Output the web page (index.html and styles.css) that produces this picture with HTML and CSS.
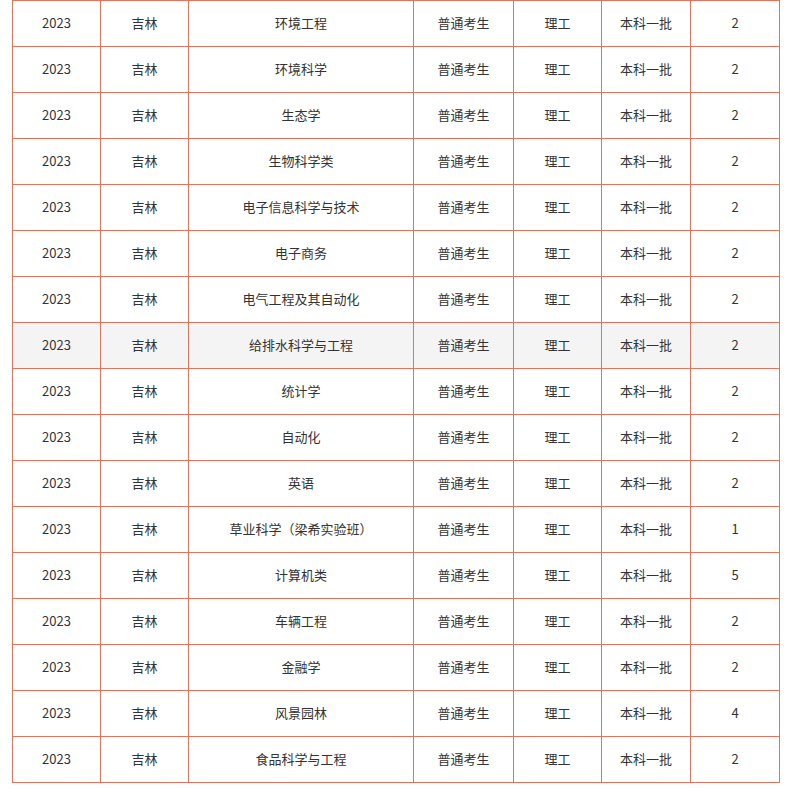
FILE: index.html
```html
<!DOCTYPE html>
<html>
<head>
<meta charset="utf-8">
<link rel="stylesheet" href="styles.css">
</head>
<body>
<table class="tbl">
<colgroup>
<col class="c1"><col class="c2"><col class="c3"><col class="c4"><col class="c5"><col class="c6"><col class="c7">
</colgroup>
<tbody>
<tr><td>2023</td><td>吉林</td><td>环境工程</td><td>普通考生</td><td>理工</td><td>本科一批</td><td>2</td></tr>
<tr><td>2023</td><td>吉林</td><td>环境科学</td><td>普通考生</td><td>理工</td><td>本科一批</td><td>2</td></tr>
<tr><td>2023</td><td>吉林</td><td>生态学</td><td>普通考生</td><td>理工</td><td>本科一批</td><td>2</td></tr>
<tr><td>2023</td><td>吉林</td><td>生物科学类</td><td>普通考生</td><td>理工</td><td>本科一批</td><td>2</td></tr>
<tr><td>2023</td><td>吉林</td><td>电子信息科学与技术</td><td>普通考生</td><td>理工</td><td>本科一批</td><td>2</td></tr>
<tr><td>2023</td><td>吉林</td><td>电子商务</td><td>普通考生</td><td>理工</td><td>本科一批</td><td>2</td></tr>
<tr><td>2023</td><td>吉林</td><td>电气工程及其自动化</td><td>普通考生</td><td>理工</td><td>本科一批</td><td>2</td></tr>
<tr class="hl"><td>2023</td><td>吉林</td><td>给排水科学与工程</td><td>普通考生</td><td>理工</td><td>本科一批</td><td>2</td></tr>
<tr><td>2023</td><td>吉林</td><td>统计学</td><td>普通考生</td><td>理工</td><td>本科一批</td><td>2</td></tr>
<tr><td>2023</td><td>吉林</td><td>自动化</td><td>普通考生</td><td>理工</td><td>本科一批</td><td>2</td></tr>
<tr><td>2023</td><td>吉林</td><td>英语</td><td>普通考生</td><td>理工</td><td>本科一批</td><td>2</td></tr>
<tr><td>2023</td><td>吉林</td><td>草业科学（梁希实验班）</td><td>普通考生</td><td>理工</td><td>本科一批</td><td>1</td></tr>
<tr><td>2023</td><td>吉林</td><td>计算机类</td><td>普通考生</td><td>理工</td><td>本科一批</td><td>5</td></tr>
<tr><td>2023</td><td>吉林</td><td>车辆工程</td><td>普通考生</td><td>理工</td><td>本科一批</td><td>2</td></tr>
<tr><td>2023</td><td>吉林</td><td>金融学</td><td>普通考生</td><td>理工</td><td>本科一批</td><td>2</td></tr>
<tr><td>2023</td><td>吉林</td><td>风景园林</td><td>普通考生</td><td>理工</td><td>本科一批</td><td>4</td></tr>
<tr><td>2023</td><td>吉林</td><td>食品科学与工程</td><td>普通考生</td><td>理工</td><td>本科一批</td><td>2</td></tr>
</tbody>
</table>
</body>
</html>
```
FILE: styles.css
```css
html, body {
  margin: 0;
  padding: 0;
  background: #ffffff;
}
body {
  padding-left: 12px;
  font-family: "Noto Sans CJK SC", "Noto Sans", sans-serif;
  font-size: 13px;
  color: #333333;
}
.tbl {
  border-collapse: collapse;
  table-layout: fixed;
  width: 767px;
}
.c1 { width: 88px; }
.c2 { width: 88px; }
.c3 { width: 225px; }
.c4 { width: 100px; }
.c5 { width: 88px; }
.c6 { width: 89px; }
.c7 { width: 89px; }
.tbl td {
  border: 1px solid #e4715b;
  height: 43px;
  padding: 0 0 2px 0;
  text-align: center;
  vertical-align: middle;
  line-height: 18px;
}
.tbl tr.hl td {
  background: #f4f4f4;
}
```
